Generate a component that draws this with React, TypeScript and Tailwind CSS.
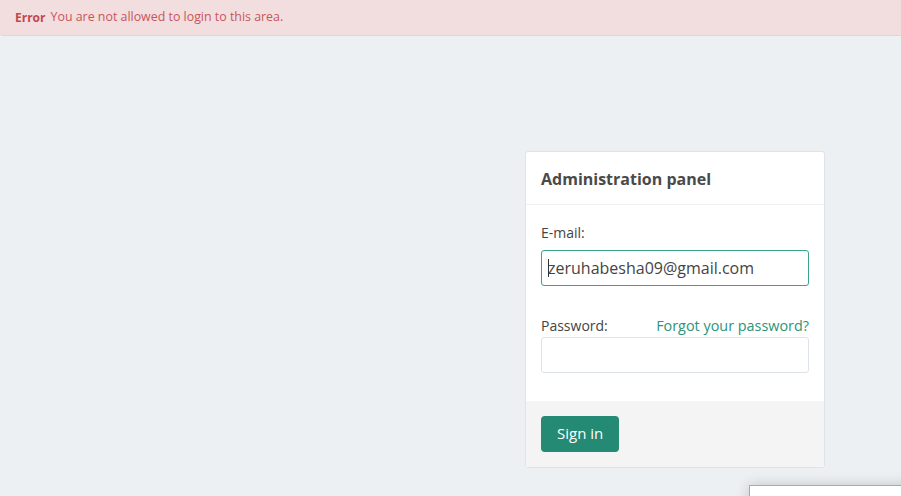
import { useState } from "react";

export default function App() {
  const [email, setEmail] = useState("zeruhabesha09@gmail.com");

  return (
    <div
      className="relative min-h-[496px] w-full overflow-hidden bg-[#ecf0f3] text-[#444]"
      style={{ fontFamily: '"Open Sans", "Noto Sans", sans-serif' }}
    >
      <div className="flex h-[36px] items-center rounded-bl-[3px] border-b border-[#efcfd4] bg-[#f2dede] px-[15px] text-[12.4px] text-[#c9555a]">
        <span className="mr-[5px] text-[12px] font-bold text-[#c2474e]">Error</span>
        You are not allowed to login to this area.
      </div>

      <div className="flex pl-[525px] pt-[115px]">
        <div className="w-[300px] rounded-[3px] border border-[#dde3e8] bg-white">
          <div className="border-b border-[#eef0f2] px-[15px] pb-[13px] pt-[15px]">
            <h1 className="text-[16px] leading-[24px] font-bold text-[#4a4a4a]">Administration panel</h1>
          </div>

          <div className="px-[15px] pb-[28px] pt-[17px]">
            <label className="mb-[7px] block text-[14px] text-[#444]">E-mail:</label>
            <div className="relative">
              <input
                value={email}
                onChange={(e) => setEmail(e.target.value)}
                className="h-[36px] w-full rounded-[3px] border border-[#3aa58c] px-[6px] text-[16px] text-[#444] outline-none"
              />
              <span className="absolute left-[7px] top-[9px] h-[18px] w-px bg-[#333]" />
            </div>

            <div className="mt-[29px] flex items-center justify-between text-[14px]">
              <label className="text-[#444]">Password:</label>
              <a href="#" className="text-[14.4px] text-[#2b9479]">Forgot your password?</a>
            </div>
            <input
              type="password"
              className="h-[36px] w-full rounded-[3px] border border-[#dde3e8] px-[6px] text-[14px] outline-none"
            />
          </div>

          <div className="bg-[#f4f4f4] px-[15px] pb-[15px] pt-[15px]">
            <button className="h-[36px] rounded-[4px] bg-[#248a74] px-[16px] text-[15px] text-white">
              Sign in
            </button>
          </div>
        </div>
      </div>

      <div className="absolute left-[749px] top-[485px] h-[40px] w-[200px] border-l border-t border-[#a9a9a9] bg-white shadow-[0_0_14px_rgba(0,0,0,0.18)]" />
    </div>
  );
}
